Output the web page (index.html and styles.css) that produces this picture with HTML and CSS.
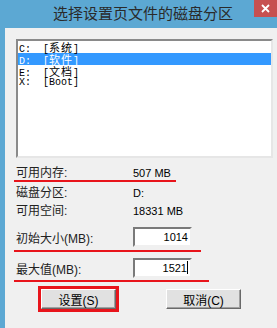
FILE: index.html
```html
<!DOCTYPE html>
<html lang="zh-CN">
<head>
  <meta charset="UTF-8" />
  <title>选择设置页文件的磁盘分区</title>
  <link rel="stylesheet" href="styles.css">
</head>
<body>

  <div class="titlebar">
    <div class="title">选择设置页文件的磁盘分区</div>
    <div class="close">
      <svg width="9" height="9" viewBox="0 0 9 9">
        <path d="M1 1 L8 8 M8 1 L1 8" stroke="#fff" stroke-width="1.8" />
      </svg>
    </div>
  </div>

  <div class="client">
    <ul class="drive-list">
      <li>C:&nbsp;&nbsp;[<span class="cjk">系统</span>]</li>
      <li class="selected">D:&nbsp;&nbsp;[<span class="cjk">软件</span>]</li>
      <li>E:&nbsp;&nbsp;[<span class="cjk">文档</span>]</li>
      <li>X:&nbsp;&nbsp;[Boot]</li>
    </ul>

    <div class="stat marked first">
      <span class="label">可用内存:</span>
      <span class="value">507 MB</span>
    </div>
    <div class="stat">
      <span class="label">磁盘分区:</span>
      <span class="value">D:</span>
    </div>
    <div class="stat">
      <span class="label">可用空间:</span>
      <span class="value">18331 MB</span>
    </div>

    <div class="field field-initial">
      <span class="label">初始大小(MB):</span>
      <div class="box">1014</div>
    </div>
    <div class="field field-max">
      <span class="label">最大值(MB):</span>
      <div class="box">1521<span class="caret"></span></div>
    </div>

    <div class="buttons">
      <button class="btn focus">设置(S)</button>
      <button class="btn">取消(C)</button>
    </div>
  </div>

</body>
</html>
```

FILE: styles.css
```css
body {
  margin: 0;
  width: 277px;
  height: 328px;
  overflow: hidden;
  background: #5ca8d3;
  font-family: "Liberation Sans", "Noto Sans CJK SC", sans-serif;
  font-size: 12px;
  color: #000;
}

.titlebar {
  display: flex;
  height: 28px;
}

.title {
  flex: 1;
  padding-left: 32px;
  text-align: center;
  line-height: 28px;
  font-size: 15px;
  color: #2a2a2a;
}

.close {
  width: 23px;
  height: 17px;
  background: #c75050;
  display: flex;
  align-items: center;
  justify-content: center;
}

.client {
  margin-left: 5px;
  height: 300px;
  padding: 11px 0 0 11px;
  box-sizing: border-box;
  background: #f0f0f0;
}

.drive-list {
  width: 257px;
  height: 119px;
  box-sizing: border-box;
  margin: 0;
  padding: 0;
  list-style: none;
  background: #fff;
  border: 2px solid;
  border-color: #8a8a8a #e6e6e6 #e6e6e6 #8a8a8a;
  font-family: "Liberation Mono", "Noto Sans CJK SC", monospace;
  font-size: 10px;
}

.drive-list li {
  height: 12px;
  line-height: 12px;
  padding-left: 1px;
  white-space: nowrap;
}

.drive-list .cjk {
  font-family: "Noto Sans CJK SC", sans-serif;
  font-size: 11px;
  letter-spacing: 1px;
}

.drive-list .selected {
  background: #3399ff;
  color: #fff;
}

.stat {
  display: flex;
  height: 14px;
  line-height: 14px;
  margin-top: 4px;
}

.stat.first {
  margin-top: 8px;
}

.label {
  width: 117px;
  flex-shrink: 0;
  color: #222;
}

.value {
  font-size: 11px;
}

.marked {
  width: 160px;
  margin-left: -2px;
  padding-left: 2px;
  border-bottom: 2px solid #e8141b;
}

.field {
  display: flex;
  align-items: center;
  height: 20px;
  margin-left: -2px;
  padding-left: 2px;
  border-bottom: 2px solid #e8141b;
}

.field-initial {
  width: 185px;
  margin-top: 9px;
  padding-bottom: 3px;
}

.field-max {
  width: 193px;
  margin-top: 6px;
  padding-bottom: 2px;
}

.box {
  width: 59px;
  height: 20px;
  box-sizing: border-box;
  border: 2px solid;
  border-color: #7a7a7a #f0f0f0 #f0f0f0 #7a7a7a;
  background: #fff;
  text-align: right;
  padding-right: 2px;
  line-height: 16px;
  font-size: 11px;
}

.caret {
  display: inline-block;
  width: 1px;
  height: 13px;
  background: #000;
  vertical-align: -2px;
}

.buttons {
  display: flex;
  gap: 50px;
  margin-top: 7px;
  padding-left: 25px;
}

.btn {
  width: 75px;
  height: 20px;
  box-sizing: border-box;
  padding: 0;
  background: #e1e1e1;
  border: 1px solid;
  border-color: #fff #696969 #696969 #fff;
  box-shadow: inset -1px -1px #a0a0a0;
  font-family: "Liberation Sans", "Noto Sans CJK SC", sans-serif;
  font-size: 12px;
  color: #000;
}

.btn.focus {
  outline: 3px solid #e8141b;
}
```
